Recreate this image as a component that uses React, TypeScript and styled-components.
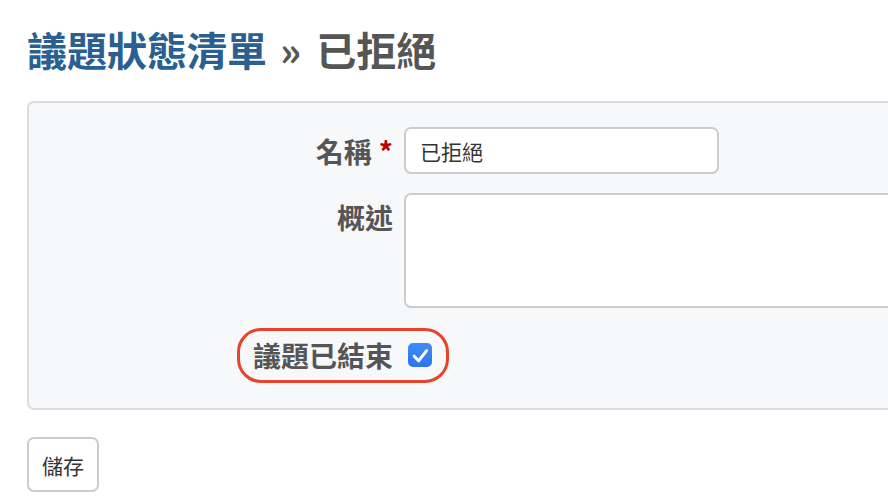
import React from "react";
import styled, { createGlobalStyle } from "styled-components";

const GlobalStyle = createGlobalStyle`
  html, body {
    margin: 0;
    padding: 0;
    background: #ffffff;
    overflow: hidden;
  }
  body {
    font-family: "Noto Sans CJK TC", "Noto Sans", "Liberation Sans", sans-serif;
    color: #333;
  }
`;

const Page = styled.div`
  width: 1000px;
  padding: 25px 0 0 27px;
  box-sizing: border-box;
`;

const Title = styled.h2`
  margin: 0 0 28px 0;
  font-size: 40px;
  line-height: 48px;
  font-weight: 700;
  color: #555555;
  white-space: nowrap;
`;

const TitleLink = styled.a`
  color: #2b5f92;
  text-decoration: none;
`;

const Separator = styled.span`
  margin: 0 15px 0 4px;
`;

const Panel = styled.div`
  box-sizing: border-box;
  width: 960px;
  background: #f7f8fa;
  border: 2px solid #d9dde2;
  border-radius: 7px;
  padding: 24px 0 33px 0;
  display: flex;
  flex-direction: column;
`;

const FormRow = styled.div<{ $top?: number; $align?: string }>`
  display: grid;
  grid-template-columns: 364px 1fr;
  column-gap: 11px;
  align-items: ${(p) => p.$align || "center"};
  margin-top: ${(p) => p.$top || 0}px;
`;

const Label = styled.label<{ $padTop?: number }>`
  display: block;
  text-align: right;
  font-size: 28px;
  line-height: 40px;
  font-weight: 700;
  color: #555555;
  padding-top: ${(p) => p.$padTop || 0}px;
  white-space: nowrap;
`;

const Required = styled.span`
  color: #bb0000;
  margin-left: 7px;
`;

const TextInput = styled.input`
  box-sizing: border-box;
  width: 315px;
  height: 47px;
  border: 2px solid #cccccc;
  border-radius: 7px;
  background: #ffffff;
  padding: 0 14px;
  font-family: "Noto Sans CJK TC", "Noto Sans", sans-serif;
  font-size: 21px;
  color: #333333;
  outline: none;
`;

const TextArea = styled.textarea`
  box-sizing: border-box;
  width: 560px;
  height: 115px;
  border: 2px solid #cccccc;
  border-radius: 7px;
  background: #ffffff;
  resize: none;
  outline: none;
  font-family: "Noto Sans CJK TC", "Noto Sans", sans-serif;
  font-size: 21px;
`;

const CheckWrap = styled.div`
  grid-column: 1 / span 2;
  display: grid;
  grid-template-columns: 364px 1fr;
  column-gap: 11px;
  align-items: center;
`;

const Highlight = styled.span`
  position: relative;
  justify-self: end;
  display: flex;

  &::after {
    content: "";
    position: absolute;
    left: -16px;
    right: -56px;
    top: -7px;
    bottom: -8px;
    border: 3.5px solid #e8432b;
    border-radius: 24px;
    pointer-events: none;
  }
`;

const CheckBox = styled.span`
  box-sizing: border-box;
  margin-left: 4px;
  width: 24px;
  height: 24px;
  border-radius: 5px;
  background: linear-gradient(#3f8af8, #2f74ee);
  display: flex;
  align-items: center;
  justify-content: center;
`;

const ButtonBar = styled.div`
  margin-top: 27px;
`;

const SaveButton = styled.button`
  box-sizing: border-box;
  width: 72px;
  height: 55px;
  border: 2px solid #cccccc;
  border-radius: 7px;
  background: #ffffff;
  font-family: "Noto Sans CJK TC", "Noto Sans", sans-serif;
  font-size: 21px;
  color: #333333;
  padding: 0;
`;

export default function App() {
  return (
    <>
      <GlobalStyle />
      <Page>
        <Title>
          <TitleLink href="#">議題狀態清單</TitleLink>
          <Separator> »</Separator>已拒絕
        </Title>
        <Panel>
          <FormRow>
            <Label>
              名稱<Required>*</Required>
            </Label>
            <TextInput defaultValue="已拒絕" />
          </FormRow>
          <FormRow $top={19} $align="start">
            <Label $padTop={4}>概述</Label>
            <TextArea />
          </FormRow>
          <FormRow $top={27}>
            <CheckWrap>
              <Highlight>
                <Label>議題已結束</Label>
              </Highlight>
              <CheckBox role="checkbox" aria-checked="true">
                <svg width="24" height="24" viewBox="0 0 24 24">
                  <polyline
                    points="6.2,13.2 10.6,17.8 18.6,7.6"
                    fill="none"
                    stroke="#ffffff"
                    strokeWidth="3"
                    strokeLinecap="round"
                    strokeLinejoin="round"
                  />
                </svg>
              </CheckBox>
            </CheckWrap>
          </FormRow>
        </Panel>
        <ButtonBar>
          <SaveButton type="button">儲存</SaveButton>
        </ButtonBar>
      </Page>
    </>
  );
}
